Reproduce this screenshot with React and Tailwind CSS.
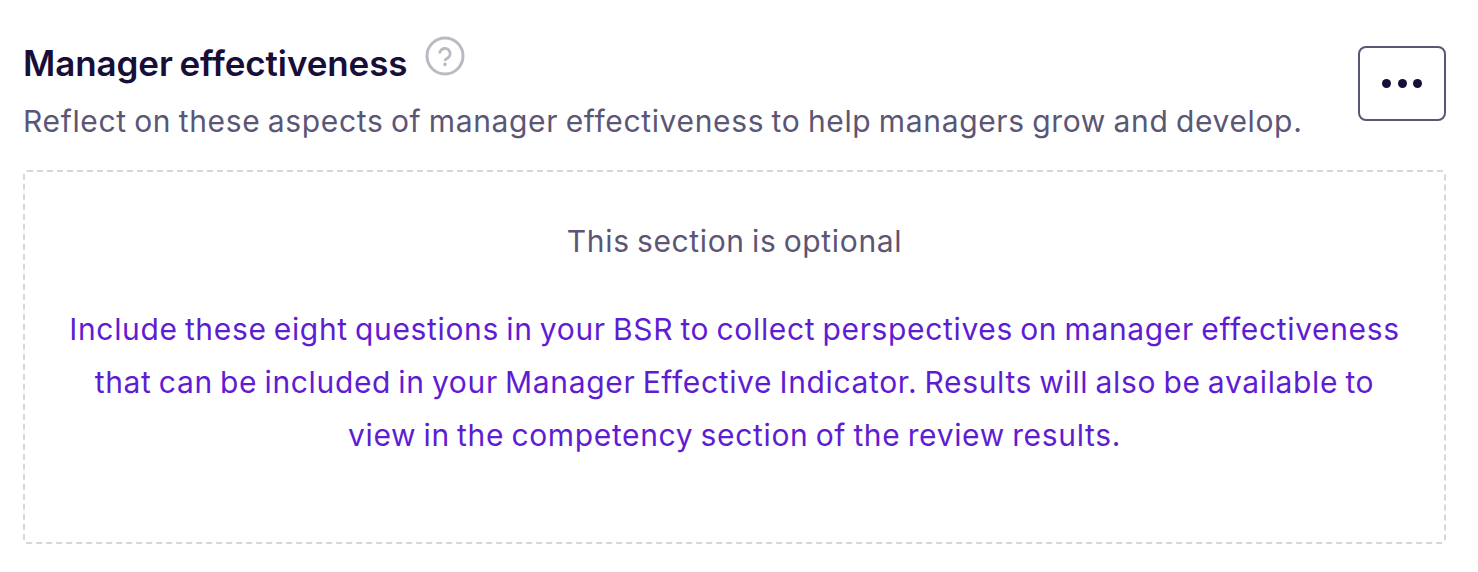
export default function App() {
  return (
    <main className="h-[572px] w-full overflow-hidden bg-white pr-8 pl-[23px] font-['Inter',sans-serif] text-[#5b5675]">
      <header className="flex h-[170px] items-start justify-between">
        <div>
          <div className="flex items-start gap-[18px] pt-9">
            <h1 className="h-[54px] w-[384px] text-[35px] leading-[54px] font-semibold tracking-[-0.1px] whitespace-nowrap text-[#180f38] [word-spacing:-2px]">Manager effectiveness</h1>
            <svg className="size-10" viewBox="0 0 40 40" fill="none" stroke="#b8bcc2" strokeWidth="3"><circle cx="20" cy="20" r="18" /><path d="M14.7 17.6a5.2 5.2 0 1 1 7.5 4.7c-1.5.8-2.2 1.2-2.2 2.6" strokeWidth="2.8" /><circle cx="20" cy="28.4" r="1.8" fill="#b8bcc2" stroke="none" /></svg>
          </div>
          <p className="text-[30px] leading-[62px] tracking-[0.65px] whitespace-nowrap [word-spacing:-1.6px]">Reflect on these aspects of manager effectiveness to help managers grow and develop.</p>
        </div>
        <button aria-label="More options" className="mt-[46px] flex h-[75px] w-[88px] shrink-0 items-center justify-center gap-[6.5px] rounded-lg border-2 border-[#5b5675]">
          <i className="size-[9px] rounded-full bg-[#180f38]" /><i className="size-[9px] rounded-full bg-[#180f38]" /><i className="size-[9px] rounded-full bg-[#180f38]" />
        </button>
      </header>
      <section className="flex h-[374px] flex-col items-center rounded border-2 border-dashed border-[#d7d7db] pt-[43px] text-[30px] tracking-[0.65px] [word-spacing:-1.8px]">
        <p className="leading-[53px]">This section is optional</p>
        <div className="mt-[35px] text-center leading-[53px] whitespace-nowrap text-[#5f1dd3]">
          <p>Include these eight questions in your BSR to collect perspectives on manager effectiveness</p>
          <p>that can be included in your Manager Effective Indicator. Results will also be available to</p>
          <p>view in the competency section of the review results.</p>
        </div>
      </section>
    </main>
  );
}
